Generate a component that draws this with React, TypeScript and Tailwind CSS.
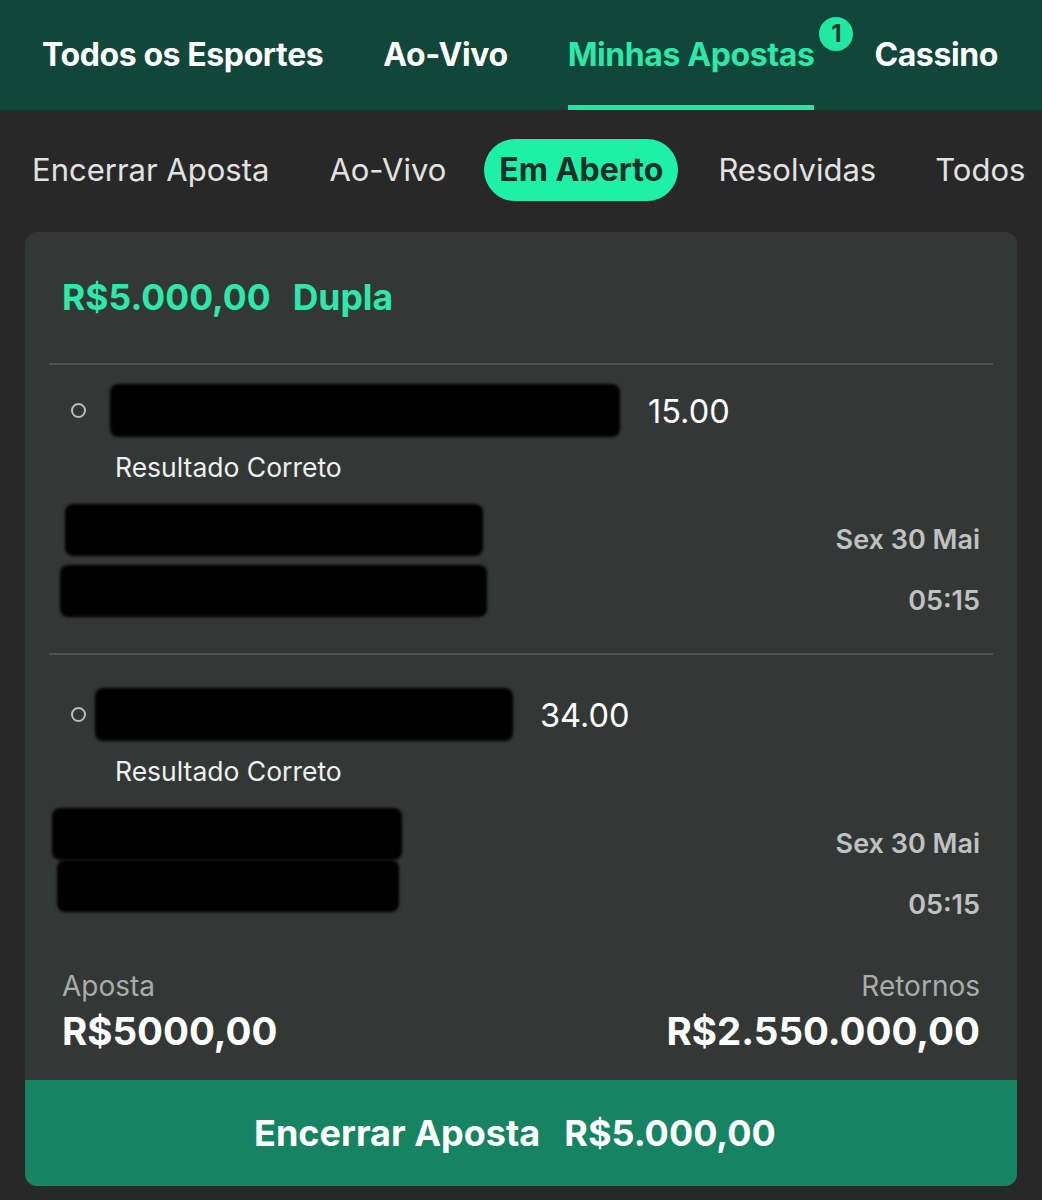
import React from "react";

const Redact = ({ w, h, ml, mt = 0 }: { w: number; h: number; ml: number; mt?: number }) => (
  <div
    className="bg-black rounded-[8px] blur-[1.5px]"
    style={{ width: w, height: h, marginLeft: ml, marginTop: mt }}
  />
);

const Selection = ({ odd, box, oddGap, boxes }: { odd: string; box: { ml: number; w: number }; oddGap: number; boxes: { ml: number; w: number; mt: number }[] }) => (
  <div className="flex flex-col">
    <div className="flex items-center h-[53px]">
      <div className="ml-[46px] w-[15px] h-[15px] rounded-full border-2 border-[#b8bcba] shrink-0" />
      <Redact w={box.w} h={53} ml={box.ml} />
      <span className="text-[32.5px] text-white leading-none mt-[3px]" style={{ marginLeft: oddGap }}>{odd}</span>
    </div>
    <div className="ml-[90px] mt-[15px] text-[26.5px] leading-[30px] text-[#eef0ef]">Resultado Correto</div>
    <div className="flex justify-between mt-[22px] pr-[37px]">
      <div className="flex flex-col">
        {boxes.map((b, i) => (
          <Redact key={i} w={b.w} h={52} ml={b.ml} mt={b.mt} />
        ))}
      </div>
      <div className="flex flex-col items-end text-[27px] font-semibold text-[#bfc2c1] leading-[30px]">
        <span className="mt-[21px]">Sex 30 Mai</span>
        <span className="mt-[31px]">05:15</span>
      </div>
    </div>
  </div>
);

export default function App() {
  return (
    <div className="w-[1042px] h-[1200px] bg-[#282828] overflow-hidden" style={{ fontFamily: "Inter, Roboto, 'Liberation Sans', sans-serif" }}>
      <div className="h-[110px] bg-[#11463a] flex items-stretch pl-[42px] gap-[60px] text-[32px] font-bold text-white tracking-[-0.4px]">
        <div className="flex items-center">Todos os Esportes</div>
        <div className="flex items-center">Ao-Vivo</div>
        <div className="relative flex items-center border-y-[5px] border-t-transparent border-b-[#22e8a6] text-[#2de8a8]">
          Minhas Apostas
          <span className="absolute -right-[39px] top-[12px] w-[34px] h-[34px] rounded-full bg-[#22e8a6] text-[#123c30] text-[24px] tracking-normal flex items-center justify-center">1</span>
        </div>
        <div className="flex items-center">Cassino</div>
      </div>

      <div className="flex items-center mt-[29px] h-[62px] text-[31px] text-[#e2e2e2] whitespace-nowrap">
        <span className="ml-[32px]">Encerrar Aposta</span>
        <span className="ml-[60px]">Ao-Vivo</span>
        <span className="ml-[38px] h-[62px] px-[15px] rounded-full bg-[#1ef0a8] text-[#173029] font-bold text-[32px] flex items-center">Em Aberto</span>
        <span className="ml-[40px]">Resolvidas</span>
        <span className="ml-[59px]">Todos</span>
      </div>

      <div className="mx-[25px] mt-[31px] rounded-[12px] bg-[#333837] overflow-hidden flex flex-col">
        <div className="h-[131px] flex items-center gap-[22px] pl-[37px] text-[35.5px] font-bold text-[#2de8a8]">
          <span>R$5.000,00</span>
          <span>Dupla</span>
        </div>
        <div className="mx-[24px] h-[2px] bg-[#4e5352]" />
        <div className="pt-[19px] h-[288px]">
          <Selection
            odd="15.00"
            box={{ ml: 24, w: 510 }}
            oddGap={28}
            boxes={[
              { ml: 40, w: 418, mt: 0 },
              { ml: 35, w: 427, mt: 9 },
            ]}
          />
        </div>
        <div className="mx-[24px] h-[2px] bg-[#4e5352]" />
        <div className="pt-[33px] h-[310px]">
          <Selection
            odd="34.00"
            box={{ ml: 9, w: 418 }}
            oddGap={27}
            boxes={[
              { ml: 27, w: 350, mt: 0 },
              { ml: 32, w: 342, mt: 0 },
            ]}
          />
        </div>
        <div className="flex justify-between px-[37px] h-[115px]">
          <div className="flex flex-col">
            <span className="text-[28px] text-[#a9acab] leading-[32px] mt-[5px]">Aposta</span>
            <span className="text-[38.5px] font-bold text-white leading-[44px] mt-[7px]">R$5000,00</span>
          </div>
          <div className="flex flex-col items-end">
            <span className="text-[28px] text-[#a9acab] leading-[32px] mt-[5px]">Retornos</span>
            <span className="text-[38.5px] font-bold text-white leading-[44px] mt-[7px]">R$2.550.000,00</span>
          </div>
        </div>
        <div className="h-[106px] bg-[#168363] flex items-center justify-center gap-[24px] pr-[12px] text-[36px] font-bold text-white">
          <span>Encerrar Aposta</span>
          <span>R$5.000,00</span>
        </div>
      </div>
    </div>
  );
}
